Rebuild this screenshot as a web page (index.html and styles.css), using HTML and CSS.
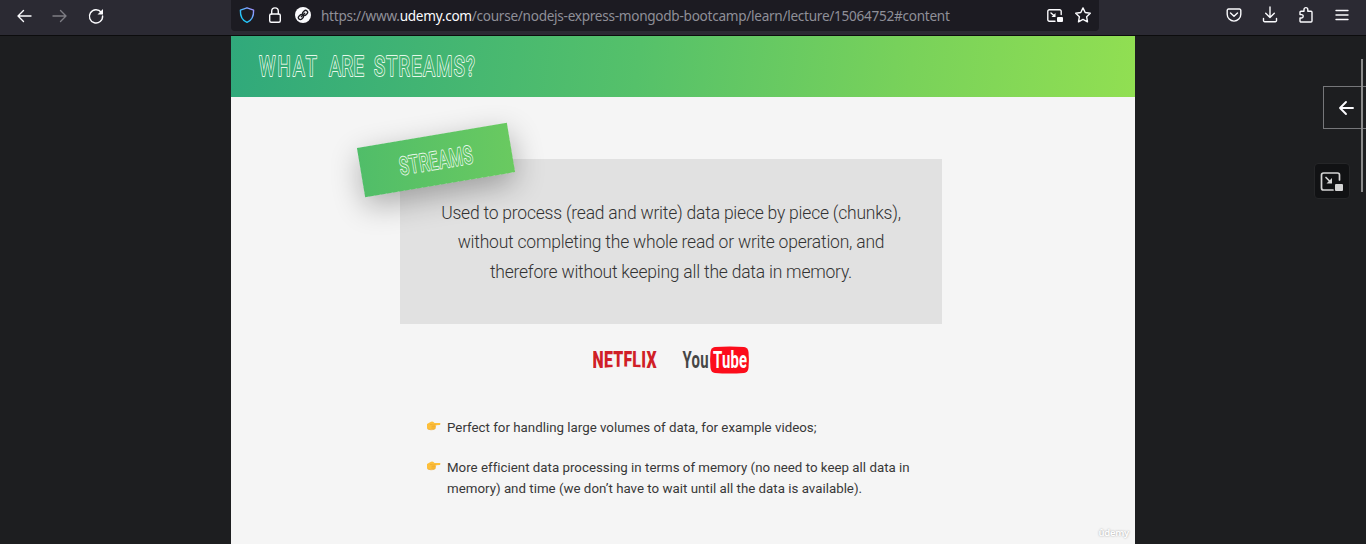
FILE: index.html
```
<!DOCTYPE html>
<html lang="en">
<head>
<meta charset="utf-8">
<title>What are streams?</title>
<link rel="stylesheet" href="styles.css">
</head>
<body>
<header class="toolbar">
  <nav class="nav">
    <svg width="16" height="16" viewBox="0 0 16 16"><path d="M15 8H2M7.500 2.500 2 8l5.500 5.500"/></svg>
    <svg class="dim" width="16" height="16" viewBox="0 0 16 16"><path d="M1 8h13M8.500 2.500 14 8l-5.500 5.500"/></svg>
    <svg width="16" height="16" viewBox="0 0 16 16"><path d="M13.200 4.300A6.600 6.600 0 1 0 14.600 8"/><path class="solid" d="M15 1v5.500H9.500z"/></svg>
  </nav>
  <div class="urlbar">
    <svg width="16" height="16" viewBox="0 0 16 16"><defs><linearGradient id="shield" x1="0" y1="1" x2="1" y2="0"><stop offset=".25" stop-color="#20c8fa"/><stop offset="1" stop-color="#ad8cff"/></linearGradient></defs><path stroke="url(#shield)" d="M8 .8 14.600 3.200C14.800 8.500 12.500 13.500 8 15.300 3.500 13.500 1.200 8.500 1.400 3.200z"/></svg>
    <svg width="16" height="16" viewBox="0 0 16 16"><rect x="2.700" y="7" width="10.600" height="8.200" rx="1.500"/><path d="M4.700 7V4.200a3.300 3.300 0 0 1 6.600 0V7"/></svg>
    <svg width="16" height="16" viewBox="0 0 16 16"><circle class="solid" cx="8" cy="8" r="8"/><g class="chain" transform="rotate(-45 8 8)"><rect x="2.300" y="6" width="5.400" height="4" rx="2"/><rect x="8.300" y="6" width="5.400" height="4" rx="2"/><path d="M5.500 8h5"/></g></svg>
    <span class="url">https://www.<b>udemy.com</b>/course/nodejs-express-mongodb-bootcamp/learn/lecture/15064752#content</span>
    <svg class="low" width="16" height="16" viewBox="0 0 16 16"><path d="M14.200 6.500V3.300a1.500 1.500 0 0 0-1.500-1.500H2.300A1.500 1.500 0 0 0 .8 3.300v8.400a1.500 1.500 0 0 0 1.500 1.500H8M4 5l3.500 3"/><path class="solid" d="M8.500 5v4h-4z"/><rect class="solid" x="10" y="9" width="6" height="5" rx="1"/></svg>
    <svg width="16" height="16" viewBox="0 0 16 16"><path d="m8 .9 2.200 4.600 5.100.7-3.700 3.500.9 5.100L8 12.400l-4.500 2.400.9-5.100L.7 6.200l5.100-.7z"/></svg>
  </div>
  <nav class="tools">
    <svg width="16" height="16" viewBox="0 0 16 16"><path d="M2.500 2h11a1.300 1.300 0 0 1 1.300 1.300v4a6.800 6.800 0 0 1-13.600 0v-4A1.300 1.300 0 0 1 2.500 2zM4.500 6 8 9.200 11.500 6"/></svg>
    <svg width="16" height="16" viewBox="0 0 16 16"><path d="M8 0v10.500M3.700 6.300 8 10.600l4.300-4.300M1.500 11.500v2a1.200 1.200 0 0 0 1.200 1.200h10.600a1.200 1.200 0 0 0 1.200-1.200v-2"/></svg>
    <svg width="16" height="16" viewBox="0 0 16 16"><path d="M2 5.200a1 1 0 0 1 1-1h3V2.500a1.900 1.900 0 0 1 3.800 0v1.700H13a1 1 0 0 1 1 1V14a1 1 0 0 1-1 1H3a1 1 0 0 1-1-1v-3h1.500a1.500 1.500 0 0 0 0-3.400H2z"/></svg>
    <svg width="16" height="16" viewBox="0 0 16 16"><path d="M2 3.500h12M2 8h12M2 12.500h12"/></svg>
  </nav>
</header>
<main class="stage">
  <section class="slide">
    <h1 class="banner"><svg width="216" height="24" viewBox="0 0 216 24"><g class="inline-type"><text fill="#37ad77" transform="translate(0 22) scale(.65 1)" textLength="89">WHAT</text><text fill="#3cb075" transform="translate(70 22) scale(.65 1)" textLength="54">ARE</text><text fill="#43b571" transform="translate(115 22) scale(.65 1)" textLength="155">STREAMS?</text></g></svg></h1>
    <div class="definition">
      <div class="tag"><svg width="74" height="24" viewBox="0 0 74 24"><g class="inline-type small"><text fill="#5dc364" transform="translate(0 21) scale(.62 1)" textLength="119">STREAMS</text></g></svg></div>
      <p>Used to process (read and write) data piece by piece (chunks),<br>without completing the whole read or write operation, and<br>therefore without keeping all the data in memory.</p>
    </div>
    <div class="logos">
      <svg width="64" height="26" viewBox="0 0 64 26"><defs><clipPath id="arc"><path d="M0 0h64v23Q32 18 0 23z"/></clipPath></defs><g clip-path="url(#arc)"><text class="netflix" transform="translate(-.5 22) scale(.66 1)" textLength="97">NETFLIX</text></g></svg>
      <svg width="67" height="28" viewBox="0 0 67 28"><path class="tube-box" d="M32 1Q47 0 61 1q4 .5 4.500 5 .8 8 0 16-.5 4.500-4.500 5-15 1-29 0-4-.5-4.500-5-.8-8 0-16Q28 1.500 32 1z"/><text class="you" transform="translate(-.5 22) scale(.62 1)" textLength="42">You</text><text class="tube" transform="translate(30 22) scale(.62 1)" textLength="55">Tube</text></svg>
    </div>
    <ul class="points">
      <li><svg class="hand" width="14" height="10" viewBox="0 0 14 10"><use href="#finger"/></svg><span>Perfect for handling large volumes of data, for example videos;</span></li>
      <li><svg class="hand" width="14" height="10" viewBox="0 0 14 10"><g id="finger"><path fill="#fdbf3a" d="M0 3 4 .8Q5.500 0 6.500 1L7.500 2l5.500.1q1 .8 0 1.800L8.500 4.200q1 4-1.500 4.300l-4 .3Q1.500 8.800 0 7.500z"/><path fill="none" stroke="#e29a25" stroke-width=".5" d="M3.500 3.500 6 4h3M5 5.700h3.500M4.800 7.200H8M1 8.200q3 1.300 6 .3"/></g></svg><span>More efficient data processing in terms of memory (no need to keep all data in<br>memory) and time (we don’t have to wait until all the data is available).</span></li>
    </ul>
    <div class="watermark">ûdemy</div>
  </section>
  <aside class="side">
    <div class="expand"><svg width="16" height="16" viewBox="0 0 16 16"><path d="M15 8H2M8 2 2 8l6 6"/></svg></div>
    <div class="pip"><svg width="24" height="20" viewBox="0 0 24 20"><path d="M19.500 8V3a2 2 0 0 0-2-2h-14a2 2 0 0 0-2 2v13a2 2 0 0 0 2 2H13M6 5.500l4 4"/><path class="gray" d="M12 6v5.500H6.500z"/><rect class="gray" x="15" y="12" width="8" height="7" rx="1"/></svg></div>
    <div class="scroll"></div>
  </aside>
</main>
</body>
</html>
```
FILE: styles.css
```
* { box-sizing: border-box; }
body { margin: 0; width: 1366px; height: 544px; overflow: hidden; background: #1d1e20; font-family: Roboto, "Liberation Sans", sans-serif; }
svg { display: block; flex: none; overflow: visible; fill: none; stroke: #fbfbfe; stroke-width: 1.4; stroke-linecap: round; stroke-linejoin: round; }
.solid { fill: #fbfbfe; stroke: none; }
.toolbar { display: grid; grid-template-columns: 231px 868px 1fr; height: 36px; background: #2b2a33; border-bottom: 1px solid #0c0c0d; }
.nav { display: flex; gap: 20px; padding: 8px 0 0 16px; }
.dim { opacity: .4; }
.urlbar { display: flex; gap: 12px; height: 31px; padding: 7px 8px 0; background: #1c1b22; border-radius: 0 0 4px 4px; }
.low { margin-top: 1px; }
.chain { stroke: #1c1b22; stroke-width: 1.3; }
.url { width: 722px; margin-left: -2px; font: 13.600px/18px "Noto Sans", sans-serif; color: #8f8f98; white-space: nowrap; letter-spacing: -.28px; }
.url b { font-weight: 400; color: #fbfbfe; }
.tools { display: flex; gap: 20px; padding: 7px 0 0 127px; }
.stage { display: grid; grid-template-columns: 904px 231px; padding-left: 231px; height: 508px; }
.slide { position: relative; display: flex; flex-direction: column; background: #f5f5f5; color: #383838; }
.banner { margin: 0; height: 61px; padding: 18px 0 0 28px; background: linear-gradient(97deg, #30a97b 0%, #55c16a 45%, #79d25a 75%, #91df52 100%); }
.inline-type { font: 400 28.500px Roboto, sans-serif; stroke: #e5f7e9; stroke-width: 2; paint-order: stroke; }
.inline-type.small { font-size: 24.500px; }
.definition { position: relative; width: 542px; height: 165px; margin: 62px 0 0 169px; padding-top: 40px; background: #e1e1e1; }
.definition p { margin: 0; text-align: center; font-size: 17.500px; letter-spacing: -.22px; line-height: 29.300px; font-weight: 300; white-space: nowrap; color: #333; }
.tag { position: absolute; left: -40px; top: -24px; width: 152px; height: 50px; display: flex; align-items: center; justify-content: center; transform: rotate(-9.500deg); background: linear-gradient(100deg, #50bd69, #6aca60); box-shadow: 0 10px 30px rgba(0,0,0,.3); }
.logos { display: flex; gap: 26px; padding: 22px 0 0 362px; }
.netflix, .you, .tube { stroke: none; }
.netflix { font: 900 24px Roboto, sans-serif; fill: #d01f27; }
.you, .tube { font: 700 24px Roboto, sans-serif; fill: #464646; }
.tube { fill: #fff; }
.tube-box { fill: #fc0d1b; stroke: none; }
.points { list-style: none; display: grid; gap: 19px; margin: 43px 0 0; padding: 0 0 0 196px; font-size: 13.300px; letter-spacing: .01px; line-height: 21px; white-space: nowrap; }
.points li { display: flex; gap: 6px; }
.hand { margin-top: 4px; stroke: none; }
.watermark { position: absolute; right: 6px; bottom: 3px; font: 600 9.500px/16px "Noto Sans", sans-serif; letter-spacing: -.3px; color: #fff; text-shadow: 0 0 2px #999; }
.side { position: relative; display: flex; flex-direction: column; align-items: flex-end; padding-top: 50px; }
.expand { width: 43px; height: 43px; padding: 13px 0 0 14px; border: 1px solid #76777a; border-right: 0; }
.expand svg { stroke-width: 1.900; }
.pip { width: 36px; height: 36px; margin: 34px 16px 0 0; padding: 8px 0 0 5px; background: #111214; border: 1px solid #252628; border-radius: 4px; }
.pip svg { stroke: #d4d4d4; stroke-width: 1.700; }
.pip .gray { fill: #d4d4d4; stroke: none; }
.scroll { position: absolute; right: 3px; top: 23px; width: 2px; height: 133px; background: #8b8b8b; }
```
